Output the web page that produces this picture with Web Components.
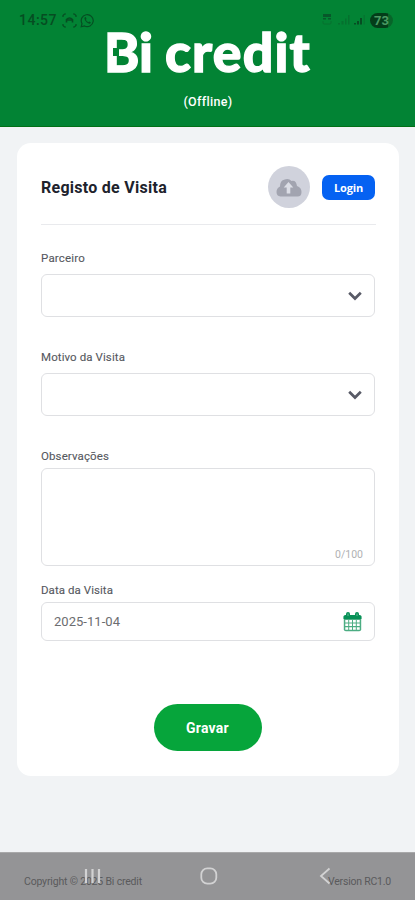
<!DOCTYPE html>
<html lang="pt">
<head>
<meta charset="utf-8">
<meta name="viewport" content="width=device-width">
<title>Bi credit</title>
<style>
html,body{margin:0;height:100%;overflow:hidden}
body{font-family:Roboto,"Liberation Sans",sans-serif;background:#f1f3f5}
</style>
</head>
<body>
<visit-app></visit-app>
<script>
const define=(name,html,init)=>customElements.define(name,class extends HTMLElement{
  connectedCallback(){
    if(this.shadowRoot)return;
    this.attachShadow({mode:'open'}).innerHTML=html;
    if(init)init(this,this.shadowRoot);
  }
});

/* Single line of text, tracked so that it spans the width attribute. */
define('fit-text',`<style>:host{display:block;white-space:nowrap;line-height:1}span{display:inline-block}</style><span><slot></slot></span>`,(el,root)=>{
  const s=root.querySelector('span'),w=+el.getAttribute('width');
  s.style.letterSpacing=(w-s.getBoundingClientRect().width)/el.textContent.length+'px';
  el.style.width=w+'px';
});

define('status-bar',`<style>
:host{display:flex;align-items:center;height:18px;padding:0 22px 0 19px;color:#064d22}
fit-text{font:500 14px/18px Roboto,sans-serif;margin-right:5px}
svg{display:block;flex:none}.sp{flex:1}
.bat{box-sizing:border-box;width:23px;height:15px;border-radius:8px;background:linear-gradient(90deg,#043d19 78%,#076529 78%);color:#4b9a63;font:700 13px/15px Roboto,sans-serif;text-align:center;margin-left:5px}
</style>
<fit-text width="38">14:57</fit-text>
<svg width="15" height="15" viewBox="0 0 15 15" fill="none" stroke="currentColor" stroke-width="1.200"><path d="M1 4V2.500L2.500 1H4M11 1h1.500L14 2.500V4M14 11v1.500L12.500 14H11M4 14H2.500L1 12.500V11"/><path d="M4.500 9.500V6.500Q7.500 3.500 10.500 6.500V9.500M4.500 7h6" stroke-width="1.600"/></svg>
<svg style="margin-left:3px" width="15" height="15" viewBox="0 0 15 15"><path d="M1.200 13.800 2 10.600A6 6 0 1 1 4.500 13z" fill="none" stroke="currentColor" stroke-width="1.200"/><path d="M5 4Q3.800 5 5 7.200T8.700 10.600Q10.300 11 10.900 9.500L9.300 8.500 8.400 9.300Q6.700 8.600 5.800 6.800L6.500 6 5.900 4.200z" fill="currentColor"/></svg>
<span class="sp"></span>
<svg width="44" height="14" viewBox="0 0 44 14"><g fill="#07672b"><path d="M2 1h8v3H2zM2 5h3v1.500H2zM7 5h3v1.500H7z" fill="#07582a"/><path d="M2 8v2q0 1 1 1h6q1 0 1-1V8" fill="none" stroke="#07702f"/><path d="M17 10h2v1.500h-2zM20.500 8h2v3.500h-2zM24 5.500h1.500v6H24zM27 2h1.500v9.500H27z" opacity=".65"/><path d="M33 10h2v1.500h-2zM36 8h2v3.500h-2z" fill="#064d22"/><path d="M39 5h2v6.500h-2z" fill="#064d22"/><path d="M42.500 2H44v9.500h-1.500z" opacity=".5"/></g></svg>
<span class="bat">73</span>`);

define('brand-header',`<style>
:host{display:flex;flex-direction:column;align-items:center;box-sizing:border-box;height:127px;padding-top:11px;background:#028334;border-bottom:1px solid #027016;color:#fff}
status-bar{align-self:stretch}
.logo{position:relative;display:flex;gap:12px;height:54px;margin-top:-8px}
.logo fit-text{font:900 53.500px/60px Lato,sans-serif;-webkit-text-stroke:1.300px #fff}
.logo i{position:absolute;left:9px;top:27px;width:6px;height:8px;background:#028334}
.off{font:500 12.500px/16px Roboto,sans-serif;margin-top:19px}
</style>
<status-bar></status-bar>
<div class="logo"><fit-text width="49">Bi</fit-text><fit-text width="146">credit</fit-text><i></i></div>
<fit-text class="off" width="48">(Offline)</fit-text>`);

define('cloud-button',`<style>:host{display:flex;align-items:center;justify-content:center;width:42px;height:42px;border-radius:50%;background:#d0d2dc}</style>
<svg width="26" height="19" viewBox="0 0 26 19"><path d="M4.500 18.500Q.5 18 .5 14T4 8.500Q4 3 8 1.800 12.500-.5 15.500 3 20 1.800 21 8 25.500 9.500 25.500 14T21.500 18.500z" fill="#a2a4b0"/><path d="M12.500 4 17.300 9.600H14.300V15.500H10.700V9.600H7.700z" fill="#dcdee6"/></svg>`);

define('login-button',`<style>:host{display:flex;align-items:center;justify-content:center;width:53px;height:25px;border-radius:7px;background:#0562f2;color:#fff;font:700 11px/14px "Open Sans",sans-serif}</style><fit-text width="29">Login</fit-text>`);

define('field-label',`<style>:host{display:block;height:16px;color:#55585e}fit-text{font:400 11.500px/16px Roboto,sans-serif;-webkit-text-stroke:.1px #55585e}</style>`,(el,root)=>{
  const t=document.createElement('fit-text');
  t.setAttribute('width',el.getAttribute('width'));
  t.textContent=el.getAttribute('text');
  root.append(t);
});

define('field-box',`<style>:host{display:flex;align-items:center;justify-content:space-between;box-sizing:border-box;width:334px;border:1.500px solid #dfe0e3;border-radius:6px;padding:0 12px;background:#fff}</style><slot></slot>`);

define('select-box',`<style>:host{display:block}field-box{height:43px;justify-content:flex-end}</style>
<field-box><svg width="14" height="10" viewBox="0 0 14 10" fill="none" stroke="#585a66" stroke-width="2.700"><path d="M1.200 1.800 7 7.500 12.800 1.800"/></svg></field-box>`);

define('calendar-icon',`<style>:host{display:block;width:19px;height:20px}svg{display:block}</style>
<svg width="19" height="20" viewBox="0 0 19 20"><rect x=".8" y="3.500" width="17.400" height="15.700" rx="2" fill="#4cad83"/><path d="M.5 7V4.500q0-1.500 2-1.500h14q2 0 2 1.500V7z" fill="#079157"/><g fill="#fff"><path id="r" d="M2.300 8h2.900v2.500H2.300zM6.200 8h2.800v2.500H6.200zM10 8h2.800v2.500H10zM13.800 8h2.900v2.500h-2.900z"/><use href="#r" y="3.600"/><use href="#r" y="7.200"/></g><path d="M5 2v2M14 2v2" stroke="#079157" stroke-width="4" stroke-linecap="round"/><path d="M5 1.500v2.500M14 1.500v2.500" stroke="#7fc4a4" stroke-width=".8"/></svg>`);

define('save-button',`<style>:host{display:flex;align-items:center;justify-content:center;width:108px;height:47px;border-radius:24px;background:#06a53b;color:#fff;font:700 14px/18px Roboto,sans-serif}</style><fit-text width="43">Gravar</fit-text>`);

define('visit-card',`<style>
:host{display:flex;flex-direction:column;box-sizing:border-box;width:382px;height:633px;margin:16px 0 0 17px;padding:0 23px 0 24px;background:#fff;border-radius:14px}
header{display:flex;align-items:center;height:82px;padding-top:7px;box-sizing:border-box;border-bottom:1.500px solid #e9eaed;flex:none}
header fit-text{font:700 16px/20px Roboto,sans-serif;color:#20222c;flex:none;margin:2px 101px 0 0}
login-button{margin-left:12px}
.a{margin-top:25px}.a+*{margin-top:8px}
.b{margin-top:32px}.b+*{margin-top:8px}
.c{margin-top:32px}.c+*{margin-top:4px}
.d{margin-top:16px}.d+*{margin-top:4px}
.area{height:98px;align-items:flex-end;justify-content:flex-end;padding:0 11px 2px}
.area fit-text{font:400 10.500px/16px Roboto,sans-serif;color:#b0b1b3}
.date{height:39px}.date fit-text{font:400 13px/18px Roboto,sans-serif;color:#6c6d70}
save-button{align-self:center;margin:63px 2px 0 0}
</style>
<header><fit-text width="126">Registo de Visita</fit-text><cloud-button></cloud-button><login-button></login-button></header>
<field-label class="a" text="Parceiro" width="44"></field-label><select-box></select-box>
<field-label class="b" text="Motivo da Visita" width="84"></field-label><select-box></select-box>
<field-label class="c" text="Observações" width="68"></field-label><field-box class="area"><fit-text width="28">0/100</fit-text></field-box>
<field-label class="d" text="Data da Visita" width="72"></field-label><field-box class="date"><fit-text width="66">2025-11-04</fit-text><calendar-icon></calendar-icon></field-box>
<save-button></save-button>`);

define('app-footer',`<style>
:host{display:flex;justify-content:space-between;position:relative;box-sizing:border-box;height:48px;margin-top:auto;padding:22px 24px 0;background:#949496;border-top:1px solid #a9a9aa;color:#5a5a5c;font:400 10.500px/14px Roboto,sans-serif}
fit-text{line-height:14px}
svg{position:absolute;left:0;top:-1px}
</style>
<fit-text width="118">Copyright © 2025 Bi credit</fit-text><fit-text width="63">Version RC1.0</fit-text>
<svg width="415" height="48" viewBox="0 0 415 48" fill="none" stroke="#d2d2d3"><path d="M86 17v14M92.500 17v14M99 17v14" stroke-width="2.200"/><rect x="201.300" y="16.300" width="15" height="15.400" rx="6" stroke-width="1.800"/><path d="M329.500 16.500 321 24l8.500 7.500" stroke-width="1.800"/></svg>`);

define('visit-app',`<style>:host{display:flex;flex-direction:column;width:415px;height:900px}</style>
<brand-header></brand-header><visit-card></visit-card><app-footer></app-footer>`);
</script>
</body>
</html>
